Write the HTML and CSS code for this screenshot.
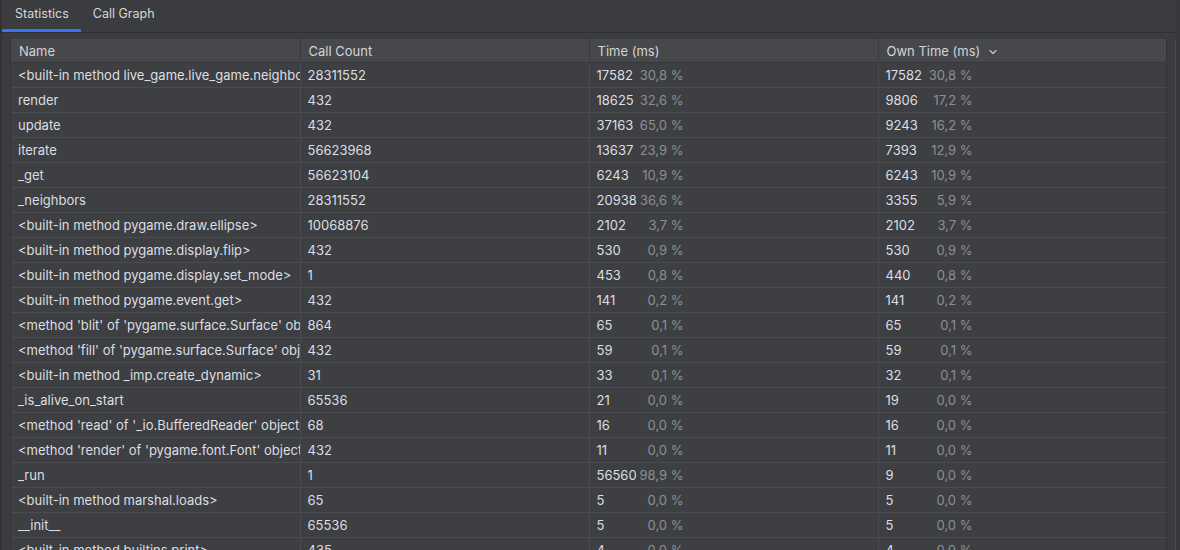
FILE: index.html
```html
<!DOCTYPE html>
<html>
<head>
<meta charset="utf-8">
<link rel="stylesheet" href="styles.css">
</head>
<body>
<div class="window">
  <div class="panel">
    <div class="tabs">
      <div class="tab active">Statistics</div>
      <div class="tab">Call Graph</div>
    </div>
    <div class="content">
      <div class="table-wrap">
        <table class="stats">
          <colgroup>
            <col class="c1"><col class="c2"><col class="c3"><col class="c4">
          </colgroup>
          <thead>
            <tr>
              <th>Name</th>
              <th>Call Count</th>
              <th>Time (ms)</th>
              <th>Own Time (ms)<svg class="chev" width="10" height="10" viewBox="0 0 10 10"><path d="M2 3.5 L5 6.5 L8 3.5" fill="none" stroke="#c9cbcf" stroke-width="1.1" stroke-linecap="round" stroke-linejoin="round"/></svg></th>
            </tr>
          </thead>
          <tbody>
            <tr><td>&lt;built-in method live_game.live_game.neighbors&gt;</td><td>28311552</td><td><span class="n">17582</span><span class="p">30,8 %</span></td><td><span class="n">17582</span><span class="p">30,8 %</span></td></tr>
            <tr><td>render</td><td>432</td><td><span class="n">18625</span><span class="p">32,6 %</span></td><td><span class="n">9806</span><span class="p">17,2 %</span></td></tr>
            <tr><td>update</td><td>432</td><td><span class="n">37163</span><span class="p">65,0 %</span></td><td><span class="n">9243</span><span class="p">16,2 %</span></td></tr>
            <tr><td>iterate</td><td>56623968</td><td><span class="n">13637</span><span class="p">23,9 %</span></td><td><span class="n">7393</span><span class="p">12,9 %</span></td></tr>
            <tr><td>_get</td><td>56623104</td><td><span class="n">6243</span><span class="p">10,9 %</span></td><td><span class="n">6243</span><span class="p">10,9 %</span></td></tr>
            <tr><td>_neighbors</td><td>28311552</td><td><span class="n">20938</span><span class="p">36,6 %</span></td><td><span class="n">3355</span><span class="p">5,9 %</span></td></tr>
            <tr><td>&lt;built-in method pygame.draw.ellipse&gt;</td><td>10068876</td><td><span class="n">2102</span><span class="p">3,7 %</span></td><td><span class="n">2102</span><span class="p">3,7 %</span></td></tr>
            <tr><td>&lt;built-in method pygame.display.flip&gt;</td><td>432</td><td><span class="n">530</span><span class="p">0,9 %</span></td><td><span class="n">530</span><span class="p">0,9 %</span></td></tr>
            <tr><td>&lt;built-in method pygame.display.set_mode&gt;</td><td>1</td><td><span class="n">453</span><span class="p">0,8 %</span></td><td><span class="n">440</span><span class="p">0,8 %</span></td></tr>
            <tr><td>&lt;built-in method pygame.event.get&gt;</td><td>432</td><td><span class="n">141</span><span class="p">0,2 %</span></td><td><span class="n">141</span><span class="p">0,2 %</span></td></tr>
            <tr><td>&lt;method 'blit' of 'pygame.surface.Surface' objects&gt;</td><td>864</td><td><span class="n">65</span><span class="p">0,1 %</span></td><td><span class="n">65</span><span class="p">0,1 %</span></td></tr>
            <tr><td>&lt;method 'fill' of 'pygame.surface.Surface' objects&gt;</td><td>432</td><td><span class="n">59</span><span class="p">0,1 %</span></td><td><span class="n">59</span><span class="p">0,1 %</span></td></tr>
            <tr><td>&lt;built-in method _imp.create_dynamic&gt;</td><td>31</td><td><span class="n">33</span><span class="p">0,1 %</span></td><td><span class="n">32</span><span class="p">0,1 %</span></td></tr>
            <tr><td>_is_alive_on_start</td><td>65536</td><td><span class="n">21</span><span class="p">0,0 %</span></td><td><span class="n">19</span><span class="p">0,0 %</span></td></tr>
            <tr><td>&lt;method 'read' of '_io.BufferedReader' objects&gt;</td><td>68</td><td><span class="n">16</span><span class="p">0,0 %</span></td><td><span class="n">16</span><span class="p">0,0 %</span></td></tr>
            <tr><td>&lt;method 'render' of 'pygame.font.Font' objects&gt;</td><td>432</td><td><span class="n">11</span><span class="p">0,0 %</span></td><td><span class="n">11</span><span class="p">0,0 %</span></td></tr>
            <tr><td>_run</td><td>1</td><td><span class="n">56560</span><span class="p">98,9 %</span></td><td><span class="n">9</span><span class="p">0,0 %</span></td></tr>
            <tr><td>&lt;built-in method marshal.loads&gt;</td><td>65</td><td><span class="n">5</span><span class="p">0,0 %</span></td><td><span class="n">5</span><span class="p">0,0 %</span></td></tr>
            <tr><td>__init__</td><td>65536</td><td><span class="n">5</span><span class="p">0,0 %</span></td><td><span class="n">5</span><span class="p">0,0 %</span></td></tr>
            <tr><td>&lt;built-in method builtins.print&gt;</td><td>435</td><td><span class="n">4</span><span class="p">0,0 %</span></td><td><span class="n">4</span><span class="p">0,0 %</span></td></tr>
          </tbody>
        </table>
      </div>
      <div class="scroll-gutter"></div>
    </div>
  </div>
  <div class="side-edge"></div>
</div>
</body>
</html>
```

FILE: styles.css
```css
html, body {
  margin: 0;
  padding: 0;
  height: 550px;
  overflow: hidden;
  background: #3a3c3f;
}

.window {
  display: flex;
  height: 550px;
  border-left: 2px solid #35332f;
  font-family: Inter, "Noto Sans", "Liberation Sans", sans-serif;
  font-size: 13px;
  color: #dcdee2;
}

.panel {
  flex: 1;
  display: flex;
  flex-direction: column;
  min-width: 0;
}

.tabs {
  display: flex;
  height: 32px;
  border-bottom: 1px solid #2f3134;
  background: #3a3c3f;
}

.tab {
  padding: 0 12px;
  line-height: 27px;
  font-size: 12.5px;
  color: #d6d8dc;
  border-bottom: 3px solid transparent;
  height: 29px;
}

.tab:first-child {
  padding-left: 13px;
}

.tab.active {
  border-bottom-color: #3574f0;
}

.content {
  flex: 1;
  display: flex;
  padding: 6px 0 0 8px;
  min-height: 0;
}

.table-wrap {
  width: 1155px;
  overflow: hidden;
  background: #3d3f42;
  border-left: 1px solid #35373a;
  border-right: 1px solid #303235;
}

.scroll-gutter {
  flex: 1;
  border-right: 1px solid #47494c;
}

.side-edge {
  width: 4px;
  background: #37393c;
}

.stats {
  table-layout: fixed;
  border-collapse: collapse;
  width: 1155px;
}

.c1 { width: 289px; }
.c2 { width: 289px; }
.c3 { width: 289px; }
.c4 { width: 288px; }

.stats th {
  height: 23px;
  padding: 0 0 0 8px;
  text-align: left;
  font-weight: 400;
  color: #d2d4d8;
  background: #46484b;
  border-left: 1px solid #3a3c3f;
  border-bottom: 1px solid #36383b;
  white-space: nowrap;
  overflow: hidden;
}

.stats th:first-child,
.stats td:first-child {
  border-left: none;
}

.stats td {
  height: 24px;
  padding: 0 0 0 7px;
  white-space: nowrap;
  overflow: hidden;
  text-overflow: clip;
  border-left: 1px solid #4a4c4f;
  border-bottom: 1px solid #4a4c4f;
}

.chev {
  margin-left: 8px;
  vertical-align: -1px;
}

.n {
  display: inline-block;
  min-width: 43px;
}

.p {
  display: inline-block;
  width: 44px;
  text-align: right;
  color: #8c8f94;
}
```
